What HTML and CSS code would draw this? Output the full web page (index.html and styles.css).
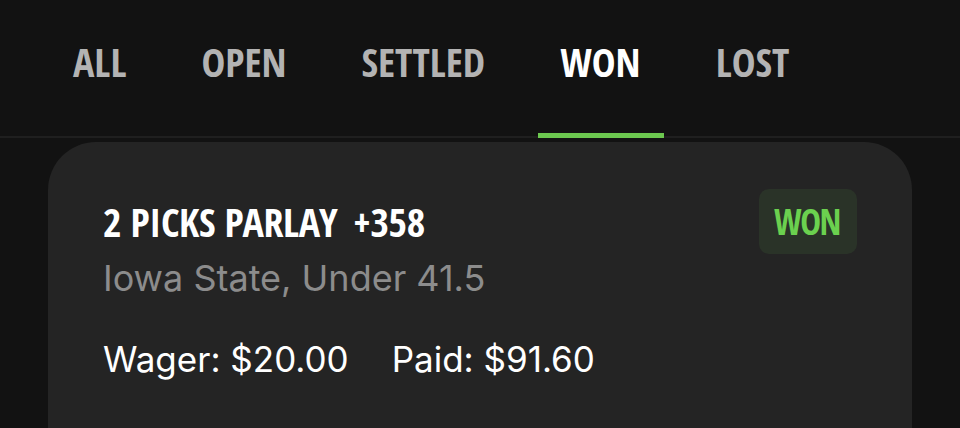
FILE: index.html
```html
<!DOCTYPE html>
<html lang="en">
<head>
  <meta charset="UTF-8">
  <title>My Bets</title>
  <link rel="stylesheet" href="styles.css">
</head>
<body>
  <nav class="tabs">
    <a class="tab" href="#">ALL</a>
    <a class="tab" href="#">OPEN</a>
    <a class="tab" href="#">SETTLED</a>
    <a class="tab active" href="#">WON</a>
    <a class="tab" href="#">LOST</a>
  </nav>

  <div class="list">
    <div class="card">
      <div class="card-head">
        <div>
          <div class="title">2 PICKS PARLAY <span class="odds">+358</span></div>
          <div class="legs">Iowa State, Under 41.5</div>
        </div>
        <span class="badge">WON</span>
      </div>
      <div class="amounts">
        <span>Wager: $20.00</span>
        <span>Paid: $91.60</span>
      </div>
    </div>
  </div>
</body>
</html>
```
FILE: styles.css
```css
body {
  margin: 0;
  height: 428px;
  background: #121212;
  color: #fff;
  font-family: Inter, "Liberation Sans", sans-serif;
  overflow: hidden;
}
.tabs {
  display: flex;
  gap: 25px;
  height: 136px;
  padding-left: 48px;
  border-bottom: 2px solid #1f1f1f;
}
.tab {
  display: flex;
  align-items: center;
  padding: 0 25px 13px;
  font-family: "Open Sans Condensed", "Roboto Condensed", sans-serif;
  font-weight: 700;
  font-size: 40px;
  color: #b3b3b3;
  text-decoration: none;
  position: relative;
}
.tab.active {
  color: #fff;
}
.tab.active::after {
  content: "";
  position: absolute;
  left: 3px;
  right: 2px;
  bottom: -2px;
  height: 5px;
  background: #6cc84f;
}
.list {
  padding: 4px 48px 0;
}
.card {
  background: #242424;
  border-radius: 48px 48px 0 0;
  padding: 47px 55px 0;
  height: 239px;
}
.card-head {
  display: flex;
  justify-content: space-between;
  align-items: flex-start;
}
.title {
  margin-top: 7px;
  font-family: "Open Sans Condensed", "Roboto Condensed", sans-serif;
  font-weight: 700;
  font-size: 40px;
  line-height: 52px;
  letter-spacing: -0.4px;
}
.odds {
  margin-left: 6px;
}
.legs {
  margin-top: 8px;
  font-size: 36px;
  color: #8c8c8c;
  line-height: 44px;
}
.badge {
  background: #2a3328;
  color: #6bd14f;
  border-radius: 10px;
  padding: 0 17px 0 15px;
  font-family: "Open Sans Condensed", "Roboto Condensed", sans-serif;
  font-weight: 700;
  font-size: 35px;
  line-height: 65px;
  letter-spacing: -1.5px;
}
.amounts {
  display: flex;
  gap: 43px;
  margin-top: 38px;
  font-size: 35px;
}
```
